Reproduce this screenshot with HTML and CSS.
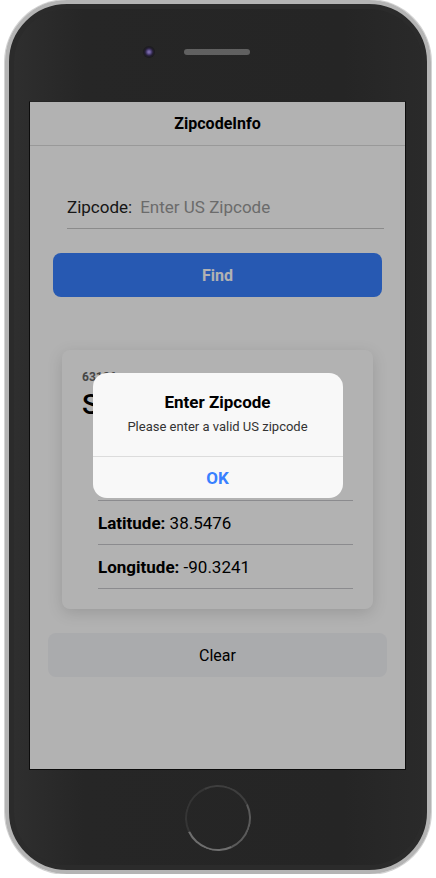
FILE: index.html
```html
<!DOCTYPE html>
<html lang="en">
<head>
<meta charset="utf-8">
<title>ZipcodeInfo</title>
<link rel="stylesheet" href="styles.css">
</head>
<body>
<div class="phone">
  <span class="side-btn mute"></span>
  <span class="side-btn vol-up"></span>
  <span class="side-btn vol-down"></span>
  <span class="side-btn power"></span>

  <div class="phone-top">
    <span class="camera"></span>
    <span class="speaker"></span>
  </div>

  <div class="screen">
    <header class="toolbar">
      <h1 class="toolbar-title">ZipcodeInfo</h1>
    </header>

    <main class="content">
      <label class="field">
        <span class="field-label">Zipcode:</span>
        <input class="field-input" type="text" placeholder="Enter US Zipcode">
      </label>

      <button class="btn btn-find" type="button">Find</button>

      <section class="card">
        <div class="card-sub">63126</div>
        <div class="card-title">Saint Louis</div>
        <ul class="list">
          <li class="list-item"><b>State:</b>&nbsp;MO</li>
          <li class="list-item"><b>Latitude:</b>&nbsp;38.5476</li>
          <li class="list-item"><b>Longitude:</b>&nbsp;-90.3241</li>
        </ul>
      </section>

      <button class="btn btn-clear" type="button">Clear</button>
    </main>

    <div class="backdrop">
      <div class="alert" role="alertdialog">
        <div class="alert-head">
          <h2 class="alert-title">Enter Zipcode</h2>
          <p class="alert-msg">Please enter a valid US zipcode</p>
        </div>
        <button class="alert-btn" type="button">OK</button>
      </div>
    </div>
  </div>

  <div class="phone-bottom">
    <span class="home"></span>
  </div>
</div>
</body>
</html>
```

FILE: styles.css
```css
html, body {
  margin: 0;
  padding: 0;
  background: #ffffff;
}

body {
  font-family: Roboto, "Liberation Sans", Arial, sans-serif;
}

/* ---------- phone frame ---------- */
.phone {
  position: relative;
  margin-left: 5px;
  width: 426px;
  height: 874px;
  box-sizing: border-box;
  padding: 0 21px 0 20px;
  border: 4px solid #b4b4b4;
  border-radius: 62px;
  background: linear-gradient(90deg, #2f2f2f 0%, #262626 18%, #252525 80%, #2a2a2a 100%);
  box-shadow: inset 0 0 0 5px #2b2b2b, 0 0 0 1px #d4d4d4;
  display: flex;
  flex-direction: column;
}

.side-btn {
  position: absolute;
  z-index: -1;
  width: 5px;
  background: #9a9a9a;
  border-radius: 2px;
}
.mute     { left: -8px; top: 104px; height: 34px; }
.vol-up   { left: -8px; top: 183px; height: 60px; }
.vol-down { left: -8px; top: 261px; height: 62px; }
.power    { right: -6px; top: 181px; height: 62px; }

.phone-top {
  height: 97px;
  box-sizing: border-box;
  padding-top: 42px;
  display: flex;
  align-items: flex-start;
}

.camera {
  margin-left: 114px;
  width: 12px;
  height: 12px;
  border-radius: 50%;
  background: radial-gradient(circle, #7a6aaa 0 1px, #4a3d72 2.5px, #241f33 4px, #1a1a1a 6px);
}

.speaker {
  margin-left: 29px;
  margin-top: 3px;
  width: 66px;
  height: 6px;
  border-radius: 3px;
  background-color: #333333;
  background-image: radial-gradient(circle, #626262 0.7px, transparent 1px);
  background-size: 2px 2px;
}

.phone-bottom {
  flex: 1;
  display: flex;
  justify-content: center;
  align-items: flex-start;
}

.home {
  margin-top: 15px;
  width: 66px;
  height: 66px;
  box-sizing: border-box;
  border-radius: 50%;
  border: 2px solid;
  border-color: #3e3e3e #5a5a5a #6e6e6e #353535;
  transform: rotate(20deg);
}

/* ---------- screen ---------- */
.screen {
  position: relative;
  width: 375px;
  height: 667px;
  border: 1px solid #0c0c0c;
  border-top-color: #262626;
  background: #ffffff;
  overflow: hidden;
}

.toolbar {
  height: 43px;
  border-bottom: 1px solid #dcdcdc;
  display: flex;
  align-items: center;
  justify-content: center;
}

.toolbar-title {
  margin: 0;
  font-size: 16px;
  font-weight: 700;
  color: #000;
}

.content {
  padding-top: 39px;
  display: flex;
  flex-direction: column;
}

.field {
  margin: 0 21px 0 37px;
  height: 43px;
  border-bottom: 1px solid #c8c8c8;
  display: flex;
  align-items: center;
  gap: 8px;
}

.field-label {
  font-size: 17px;
  color: #222;
}

.field-input {
  flex: 1;
  min-width: 0;
  border: 0;
  outline: 0;
  padding: 0;
  background: transparent;
  font-family: inherit;
  font-size: 17px;
  color: #000;
}
.field-input::placeholder {
  color: #9a9a9a;
}

.btn {
  height: 44px;
  border: 0;
  border-radius: 8px;
  font-family: inherit;
  font-size: 16px;
  cursor: pointer;
}

.btn-find {
  margin: 24px 23px 0;
  background: #3880ff;
  color: #ffffff;
  font-weight: 700;
}

.card {
  margin: 53px 32px 0;
  padding: 20px;
  background: #ffffff;
  border-radius: 8px;
  box-shadow: 0 4px 16px rgba(0, 0, 0, 0.14);
}

.card-sub {
  font-size: 12px;
  line-height: 14px;
  font-weight: 700;
  color: #666;
}

.card-title {
  margin-top: 4px;
  font-size: 28px;
  line-height: 34px;
  font-weight: 500;
  color: #000;
}

.list {
  margin: 35px 0 0 16px;
  padding: 0;
  list-style: none;
}

.list-item {
  height: 43px;
  border-bottom: 1px solid #c8c7cc;
  display: flex;
  align-items: center;
  font-size: 17px;
  color: #000;
}
.list-item b {
  font-weight: 700;
}

.btn-clear {
  margin: 24px 18px 0;
  background: #f4f5f8;
  color: #000;
  font-weight: 400;
}

/* ---------- alert ---------- */
.backdrop {
  position: absolute;
  inset: 0;
  background: rgba(0, 0, 0, 0.3);
  display: flex;
  align-items: center;
  justify-content: center;
}

.alert {
  width: 250px;
  border-radius: 14px;
  background: #f8f8f8;
  text-align: center;
  overflow: hidden;
}

.alert-head {
  padding: 19px 16px 21px;
}

.alert-title {
  margin: 0;
  font-size: 17px;
  line-height: 20px;
  font-weight: 700;
  color: #000;
}

.alert-msg {
  margin: 7px 0 0;
  font-size: 13px;
  line-height: 16px;
  color: #333;
}

.alert-btn {
  display: block;
  width: 100%;
  height: 42px;
  border: 0;
  border-top: 1px solid #dcdcdc;
  background: transparent;
  font-family: inherit;
  font-size: 17px;
  font-weight: 700;
  color: #3880ff;
}
```
